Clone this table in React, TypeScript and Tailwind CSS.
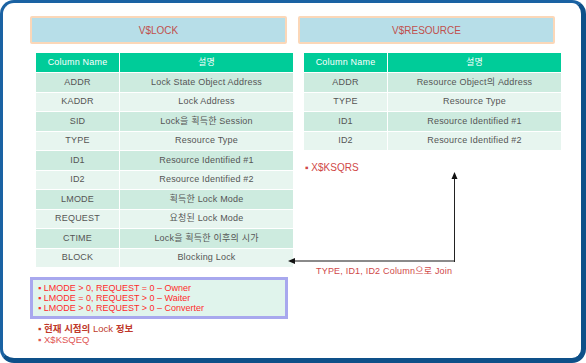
const font = { fontFamily: '"Liberation Sans", "Noto Sans CJK KR", sans-serif' };

const lockRows: [string, string][] = [
  ["ADDR", "Lock State Object Address"],
  ["KADDR", "Lock Address"],
  ["SID", "Lock을 획득한 Session"],
  ["TYPE", "Resource Type"],
  ["ID1", "Resource Identified #1"],
  ["ID2", "Resource Identified #2"],
  ["LMODE", "획득한 Lock Mode"],
  ["REQUEST", "요청된 Lock Mode"],
  ["CTIME", "Lock을 획득한 이후의 시가"],
  ["BLOCK", "Blocking Lock"],
];

const resourceRows: [string, string][] = [
  ["ADDR", "Resource Object의 Address"],
  ["TYPE", "Resource Type"],
  ["ID1", "Resource Identified #1"],
  ["ID2", "Resource Identified #2"],
];

const TitleBox = ({ title }: { title: string }) => (
  <div className="flex h-[28px] w-[257px] items-center justify-center rounded-[2px] border-2 border-[#fbd7b8] bg-[#b7dee8] text-[10px] text-[#c0504d]">
    {title}
  </div>
);

const ColumnTable = ({ rows }: { rows: [string, string][] }) => (
  <div className="ml-[6px] mt-[9px] grid w-[257px] grid-cols-[83px_1fr] gap-x-px gap-y-px text-[9px] tracking-[0.2px]">
    <div className="flex h-[19px] items-center justify-center bg-[#00cc99] text-white">Column Name</div>
    <div className="flex h-[19px] items-center justify-center bg-[#00cc99] text-white">설명</div>
    {rows.map(([name, desc], i) => {
      const bg = i % 2 === 0 ? "bg-[#cdebdf]" : "bg-[#e7f5ef]";
      return [
        <div key={name + "a"} className={`flex h-[18.5px] items-center justify-center text-[#555] ${bg}`}>
          {name}
        </div>,
        <div key={name + "b"} className={`flex h-[18.5px] items-center justify-center text-[#555] ${bg}`}>
          {desc}
        </div>,
      ];
    })}
  </div>
);

export default function App() {
  return (
    <div className="relative h-[363px] w-[586px] bg-white" style={font}>
      <div className="h-full w-full rounded-[14px] border-b-[5px] border-l-[3px] border-r-[5px] border-t-[3px] border-b-[#0e5089] border-l-[#1a62a3] border-r-[#0e5089] border-t-[#1a62a3] bg-white pl-[27px] pt-[13px]">
        <div className="flex gap-[5px]">
          <div className="flex w-[263px] flex-col">
            <TitleBox title="V$LOCK" />
            <ColumnTable rows={lockRows} />
            <div className="mt-[10px] flex w-[258px] flex-col border-[3px] border-[#a8a8ee] bg-[#e0f4ec] px-[5px] py-[3px] text-[9px] leading-[10px] text-[#ff2b2b]">
              <span>▪ LMODE &gt; 0, REQUEST = 0 – Owner</span>
              <span>▪ LMODE = 0, REQUEST &gt; 0 – Waiter</span>
              <span>▪ LMODE &gt; 0, REQUEST &gt; 0 – Converter</span>
            </div>
            <div className="mt-[4px] flex flex-col pl-[8px] text-[9.5px] leading-[11px]">
              <span className="font-bold text-[#c0392b]">
                ▪ 현재 시점의 <span className="font-normal">Lock</span> 정보
              </span>
              <span className="text-[#e05555]">▪ X$KSQEQ</span>
            </div>
          </div>
          <div className="flex w-[263px] flex-col">
            <TitleBox title="V$RESOURCE" />
            <ColumnTable rows={resourceRows} />
            <div className="ml-[7px] mt-[10px] text-[10px] text-[#d04848]">▪ X$KSQRS</div>
          </div>
        </div>
      </div>

      <svg className="absolute left-0 top-0" width="586" height="363">
        <line x1="454" y1="261" x2="292" y2="261" stroke="#8a8a8a" strokeWidth="2" />
        <line x1="454.5" y1="262" x2="454.5" y2="178" stroke="#222" strokeWidth="1" />
        <polygon points="454.5,172 451.5,179 457.5,179" fill="#111" />
        <polygon points="288,261 295,258 295,264" fill="#111" />
      </svg>
      <div className="absolute left-[316px] top-[265px] text-[9px] tracking-[0.2px] text-[#d04848]">TYPE, ID1, ID2 Column으로 Join</div>
    </div>
  );
}
